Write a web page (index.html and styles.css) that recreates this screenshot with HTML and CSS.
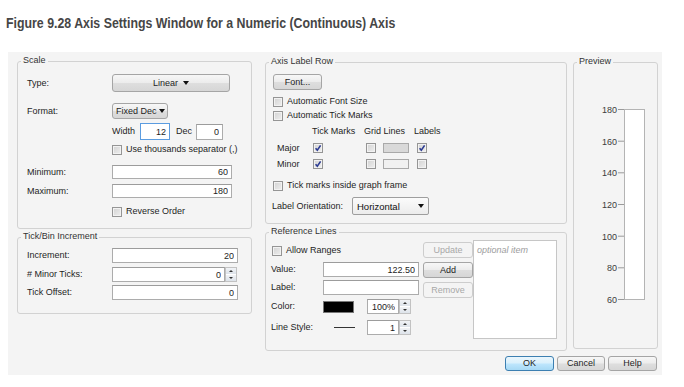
FILE: index.html
```html
<!DOCTYPE html>
<html lang="en">

<head>
    <meta charset="UTF-8">
    <title>Axis Settings</title>
    <link rel="stylesheet" href="styles.css">
</head>

<body>
    <h1 class="fig-title"><span>Figure 9.28 Axis Settings Window for a Numeric (Continuous) Axis</span></h1>

    <div class="window">
        <div class="panels">
            <!-- left column -->
            <div class="col-left">
                <div class="group scale">
                    <span class="group-title">Scale</span>
                    <div class="row r-type">
                        <span class="lbl">Type:</span>
                        <button class="btn drop drop-linear">Linear<i class="tri"></i></button>
                    </div>
                    <div class="row r-format">
                        <span class="lbl">Format:</span>
                        <button class="btn drop drop-fixed">Fixed Dec<i class="tri"></i></button>
                    </div>
                    <div class="row r-width">
                        <span class="lbl"></span>
                        <span>Width</span>
                        <input class="field f-width focus" value="12">
                        <span class="dec-lbl">Dec</span>
                        <input class="field f-dec" value="0">
                    </div>
                    <div class="row r-sep">
                        <span class="lbl"></span>
                        <span class="chk"></span>
                        <span class="chk-text">Use thousands separator (,)</span>
                    </div>
                    <div class="row r-min">
                        <span class="lbl">Minimum:</span>
                        <input class="field f-range" value="60">
                    </div>
                    <div class="row r-max">
                        <span class="lbl">Maximum:</span>
                        <input class="field f-range" value="180">
                    </div>
                    <div class="row r-rev">
                        <span class="lbl"></span>
                        <span class="chk"></span>
                        <span class="chk-text">Reverse Order</span>
                    </div>
                </div>

                <div class="group tickbin">
                    <span class="group-title">Tick/Bin Increment</span>
                    <div class="row r-inc">
                        <span class="lbl">Increment:</span>
                        <input class="field f-tick" value="20">
                    </div>
                    <div class="row r-minor">
                        <span class="lbl"># Minor Ticks:</span>
                        <input class="field f-tick-spin" value="0">
                        <span class="spin"><i class="up"></i><i class="dn"></i></span>
                    </div>
                    <div class="row r-off">
                        <span class="lbl">Tick Offset:</span>
                        <input class="field f-tick" value="0">
                    </div>
                </div>
            </div>

            <!-- middle column -->
            <div class="col-mid">
                <div class="group axislabel">
                    <span class="group-title">Axis Label Row</span>
                    <button class="btn font-btn">Font...</button>
                    <div class="row r-afs">
                        <span class="chk"></span>
                        <span class="chk-text">Automatic Font Size</span>
                    </div>
                    <div class="row r-atm">
                        <span class="chk"></span>
                        <span class="chk-text">Automatic Tick Marks</span>
                    </div>
                    <div class="tick-grid">
                        <span></span>
                        <span>Tick Marks</span>
                        <span>Grid Lines</span>
                        <span>Labels</span>

                        <span>Major</span>
                        <span class="cell c-tick"><span class="chk on"><svg viewBox="0 0 8 8"><path d="M1.6 4.2 L3.3 6.2 L6.6 1.4"/></svg></span></span>
                        <span class="cell c-grid"><span class="chk"></span><span class="swatch major"></span></span>
                        <span class="cell c-lab"><span class="chk on"><svg viewBox="0 0 8 8"><path d="M1.6 4.2 L3.3 6.2 L6.6 1.4"/></svg></span></span>

                        <span>Minor</span>
                        <span class="cell c-tick"><span class="chk on"><svg viewBox="0 0 8 8"><path d="M1.6 4.2 L3.3 6.2 L6.6 1.4"/></svg></span></span>
                        <span class="cell c-grid"><span class="chk"></span><span class="swatch minor"></span></span>
                        <span class="cell c-lab"><span class="chk"></span></span>
                    </div>
                    <div class="row r-inside">
                        <span class="chk"></span>
                        <span class="chk-text">Tick marks inside graph frame</span>
                    </div>
                    <div class="row r-orient">
                        <span class="orient-lbl">Label Orientation:</span>
                        <button class="btn-combo">Horizontal<i class="tri"></i></button>
                    </div>
                </div>

                <div class="group reflines">
                    <span class="group-title">Reference Lines</span>
                    <div class="ref-form">
                        <div class="row r-allow">
                            <span class="chk"></span>
                            <span class="chk-text">Allow Ranges</span>
                        </div>
                        <div class="row r-value">
                            <span class="ref-lbl">Value:</span>
                            <input class="field f-ref" value="122.50">
                        </div>
                        <div class="row r-label">
                            <span class="ref-lbl">Label:</span>
                            <input class="field f-ref" value="">
                        </div>
                        <div class="row r-color">
                            <span class="ref-lbl">Color:</span>
                            <span class="color-swatch"></span>
                            <input class="field f-small" value="100%">
                            <span class="spin"><i class="up"></i><i class="dn"></i></span>
                        </div>
                        <div class="row r-style">
                            <span class="ref-lbl">Line Style:</span>
                            <span class="line-sample"></span>
                            <input class="field f-small f-style" value="1">
                            <span class="spin"><i class="up"></i><i class="dn"></i></span>
                        </div>
                    </div>
                    <div class="ref-buttons">
                        <button class="btn" disabled>Update</button>
                        <button class="btn">Add</button>
                        <button class="btn" disabled>Remove</button>
                    </div>
                    <div class="ref-list">optional item</div>
                </div>
            </div>

            <!-- preview -->
            <div class="col-right">
                <div class="group preview">
                    <span class="group-title">Preview</span>
                    <svg class="axis" width="83" height="285" viewBox="0 0 83 285">
                        <rect x="50.5" y="46.5" width="20" height="190" fill="#fff" stroke="#b4b4b4" />
                        <g stroke="#9a9a9a">
                            <line x1="44" y1="46.5" x2="50" y2="46.5" />
                            <line x1="44" y1="78.2" x2="50" y2="78.2" />
                            <line x1="44" y1="109.8" x2="50" y2="109.8" />
                            <line x1="44" y1="141.5" x2="50" y2="141.5" />
                            <line x1="44" y1="173.2" x2="50" y2="173.2" />
                            <line x1="44" y1="204.8" x2="50" y2="204.8" />
                            <line x1="44" y1="236.5" x2="50" y2="236.5" />
                        </g>
                        <g class="axis-labels" text-anchor="end">
                            <text x="43" y="49.8">180</text>
                            <text x="43" y="81.5">160</text>
                            <text x="43" y="113.1">140</text>
                            <text x="43" y="144.8">120</text>
                            <text x="43" y="176.5">100</text>
                            <text x="43" y="208.1">80</text>
                            <text x="43" y="239.8">60</text>
                        </g>
                    </svg>
                </div>
            </div>
        </div>

        <div class="footer">
            <button class="btn btn-ok">OK</button>
            <button class="btn btn-cancel">Cancel</button>
            <button class="btn btn-help">Help</button>
        </div>
    </div>
</body>

</html>
```

FILE: styles.css
```css
body {
    margin: 0;
    background: #fff;
    font-family: "Liberation Sans", Arial, sans-serif;
}

.fig-title {
    margin: 14px 0 0;
    padding-left: 6px;
    font-family: "Liberation Sans", Arial, sans-serif;
    font-size: 15px;
    line-height: 18px;
    font-weight: bold;
    color: #464646;
    white-space: nowrap;
}

/* no narrow face installed, so squeeze the regular bold one */
.fig-title span {
    display: inline-block;
    transform: scaleX(0.823);
    transform-origin: 0 0;
}

/* dialog window */
.window {
    margin: 20px 0 0 8px;
    width: 654px;
    height: 323px;
    box-sizing: border-box;
    padding: 9px 4px 0 9px;
    background: #f4f4f4;
    font-size: 9px;
    line-height: 11px;
    color: #1e1e1e;
}

.panels {
    display: flex;
    align-items: flex-start;
}

.col-left {
    width: 235px;
    margin-right: 13px;
}

.col-mid {
    width: 302px;
    margin-right: 6px;
    margin-top: 1px;
}

.col-right {
    width: 85px;
    margin-top: 1px;
}

/* group boxes */
.group {
    position: relative;
    box-sizing: border-box;
    border: 1px solid #d2d2d2;
    border-radius: 3px;
}

.group-title {
    position: absolute;
    top: -7px;
    left: 3px;
    padding: 0 2px;
    background: #f4f4f4;
    color: #333;
}

.scale {
    height: 168px;
    padding-left: 9px;
}

.tickbin {
    height: 77px;
    margin-top: 8px;
    padding-left: 9px;
}

.axislabel {
    height: 162px;
    padding-left: 7px;
}

.reflines {
    height: 119px;
    margin-top: 8px;
    padding-left: 5px;
    display: flex;
    align-items: flex-start;
}

.preview {
    height: 287px;
}

.row {
    display: flex;
    align-items: center;
}

.lbl {
    width: 85px;
    flex: none;
}

/* scale rows */
.r-type { margin-top: 12px; }
.r-format { margin-top: 11px; }
.r-width { margin-top: 4px; height: 17px; }
.r-sep { margin-top: 4px; }
.r-min { margin-top: 10px; }
.r-max { margin-top: 5px; }
.r-rev { margin-top: 8px; }

/* tick rows */
.r-inc { margin-top: 10px; }
.r-minor { margin-top: 4px; }
.r-off { margin-top: 3px; }

/* axis label rows */
.r-afs { margin-top: 6px; }
.r-atm { margin-top: 3px; }
.r-inside { margin-top: 11px; }
.r-orient { margin-top: 6px; margin-left: -1px; }

/* controls */
.btn {
    box-sizing: border-box;
    height: 16px;
    padding: 0;
    font: inherit;
    color: #1e1e1e;
    border: 1px solid #a5a5a5;
    border-radius: 3px;
    background: linear-gradient(#f7f7f7, #ececec 48%, #dedede 52%, #d6d6d6);
}

.btn:disabled {
    color: #a8a8a8;
    border-color: #cdcdcd;
    background: #f4f4f4;
}

.drop {
    display: flex;
    align-items: center;
}

.tri {
    display: inline-block;
    flex: none;
    width: 0;
    height: 0;
    border-left: 3px solid transparent;
    border-right: 3px solid transparent;
    border-top: 4px solid #111;
}

.drop-linear {
    width: 118px;
    height: 18px;
    justify-content: center;
    gap: 5px;
}

.drop-fixed {
    width: 56px;
    justify-content: space-between;
    padding: 0 2px 0 3px;
    white-space: nowrap;
}

.field {
    box-sizing: border-box;
    height: 14px;
    margin: 0;
    padding: 0 3px;
    font: inherit;
    color: #1e1e1e;
    text-align: right;
    background: #fff;
    border: 1px solid #acacac;
    border-top-color: #9c9c9c;
    outline: none;
}

.field.focus {
    border-color: #5b9ce0;
}

.f-width {
    width: 30px;
    height: 17px;
    margin-left: 5px;
}

.dec-lbl {
    margin-left: 6px;
}

.f-dec {
    width: 27px;
    height: 16px;
    margin-left: 4px;
}

.f-range {
    width: 120px;
}

.f-tick {
    width: 126px;
    height: 15px;
}

.f-tick-spin {
    width: 113px;
    height: 15px;
}

.spin {
    box-sizing: border-box;
    display: flex;
    flex-direction: column;
    width: 12px;
    height: 15px;
    border: 1px solid #c2c2c2;
    background: #fff;
}

.spin i {
    flex: 1;
    display: flex;
    align-items: center;
    justify-content: center;
    background: linear-gradient(#f1f3f6, #dde3ea);
}

.spin i.up {
    border-bottom: 1px solid #fff;
}

.spin i::after {
    content: "";
    border-left: 2px solid transparent;
    border-right: 2px solid transparent;
    border-bottom: 2px solid #333;
}

.spin i.dn::after {
    border-bottom: 0;
    border-top: 2px solid #333;
}

.chk {
    box-sizing: border-box;
    width: 10px;
    height: 10px;
    flex: none;
    display: flex;
    align-items: center;
    justify-content: center;
    border: 1px solid #959595;
    background: linear-gradient(135deg, #d2d2d2, #efefef);
    box-shadow: inset 0 0 0 1px #f2f2f2;
}

.chk svg {
    width: 8px;
    height: 8px;
    fill: none;
    stroke: #2c3b92;
    stroke-width: 1.6;
}

.chk-text {
    margin-left: 4px;
}

.font-btn {
    display: block;
    width: 49px;
    margin-top: 11px;
}

/* tick / grid / label table */
.tick-grid {
    display: grid;
    grid-template-columns: 35px 52px 50px 40px;
    grid-template-rows: 11px 10px 10px;
    row-gap: 6px;
    margin: 5px 0 0 4px;
    align-items: center;
}

.cell {
    display: flex;
    align-items: center;
}

.c-tick { padding-left: 1px; }
.c-grid { padding-left: 2px; }
.c-lab { padding-left: 3px; }

.swatch {
    box-sizing: border-box;
    width: 26px;
    height: 10px;
    margin-left: 7px;
    border: 1px solid #a9a9a9;
}

.swatch.major { background: #d9d9d9; }
.swatch.minor { background: #f1f1f1; }

.orient-lbl {
    width: 80px;
}

.btn-combo {
    box-sizing: border-box;
    display: flex;
    align-items: center;
    justify-content: space-between;
    width: 77px;
    height: 18px;
    padding: 0 4px;
    font: inherit;
    font-size: 9.5px;
    color: #111;
    border: 1px solid #9e9e9e;
    border-radius: 2px;
    background: linear-gradient(#fbfbfb, #ececec);
}

/* reference lines */
.ref-form {
    width: 152px;
}

.r-allow {
    margin: 12px 0 0 1px;
}

.r-value { margin-top: 6px; }
.r-label { margin-top: 3px; }
.r-color { margin-top: 4px; }
.r-style { margin-top: 6px; }

.ref-lbl {
    width: 52px;
    flex: none;
}

.f-ref {
    width: 96px;
    height: 15px;
}

.color-swatch {
    box-sizing: border-box;
    width: 31px;
    height: 12px;
    background: #000;
    border: 1px solid #777;
}

.f-small {
    width: 32px;
    height: 15px;
    margin-left: 13px;
}

.line-sample {
    width: 21px;
    height: 1px;
    margin-left: 11px;
    background: #333;
}

.f-style {
    margin-left: 12px;
}

.ref-buttons {
    display: flex;
    flex-direction: column;
    gap: 4px;
    width: 50px;
    margin-top: 9px;
}

.ref-buttons .btn {
    width: 50px;
}

.ref-list {
    box-sizing: border-box;
    width: 84px;
    height: 99px;
    margin-top: 7px;
    padding: 4px 3px;
    border: 1px solid #c6c6c6;
    background: #fff;
    color: #9d9d9d;
    font-style: italic;
}

/* preview axis */
.axis {
    display: block;
}

.axis-labels {
    font-family: "Liberation Sans", Arial, sans-serif;
    font-size: 9px;
    fill: #3c3c3c;
}

/* footer buttons */
.footer {
    display: flex;
    justify-content: flex-end;
    gap: 3px;
    margin-top: 5px;
    padding-right: 1px;
}

.footer .btn {
    height: 15px;
}

.btn-ok {
    width: 49px;
    border-color: #3c7fb1;
    background: linear-gradient(#eaf6fd, #d9f0fc 48%, #bee6fd 52%, #a7d9f5);
}

.btn-cancel {
    width: 48px;
}

.btn-help {
    width: 49px;
}
```
